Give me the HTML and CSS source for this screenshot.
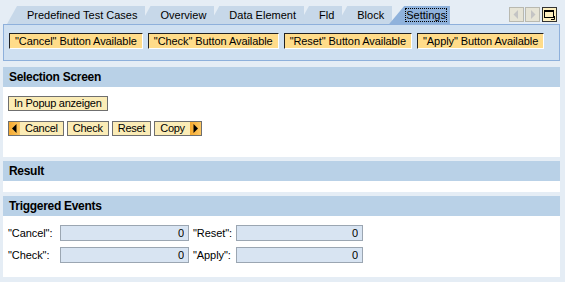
FILE: index.html
```html
<!DOCTYPE html>
<html lang="en">
<head>
    <meta charset="UTF-8">
    <title>Settings</title>
    <link rel="stylesheet" href="styles.css">
</head>
<body>
    <div class="page">
        <div class="tabstrip">
            <div class="tabs">
                <div class="tab">Predefined Test Cases</div>
                <div class="tab">Overview</div>
                <div class="tab">Data Element</div>
                <div class="tab">Fld</div>
                <div class="tab">Block</div>
                <div class="tab selected"><span class="focus">Settings</span></div>
            </div>
            <div class="tab-nav">
                <span class="nav-btn disabled">
                    <svg width="7" height="9" viewBox="0 0 7 9"><path d="M5 0 L5 9 L0.5 4.5 Z" fill="#c4c4c4"/></svg>
                </span>
                <span class="nav-btn disabled">
                    <svg width="7" height="9" viewBox="0 0 7 9"><path d="M2 0 L2 9 L6.5 4.5 Z" fill="#c4c4c4"/></svg>
                </span>
                <span class="nav-btn menu">
                    <svg width="11" height="10" viewBox="0 0 11 10">
                        <rect x="0.5" y="0.5" width="9" height="7" fill="none" stroke="#000"/>
                        <rect x="0" y="0" width="10" height="2" fill="#000"/>
                        <path d="M7 9.5 L10.5 9.5 L10.5 6" fill="none" stroke="#000"/>
                    </svg>
                </span>
            </div>
        </div>

        <div class="tabpanel">
            <span class="toggle">"Cancel" Button Available</span>
            <span class="toggle">"Check" Button Available</span>
            <span class="toggle">"Reset" Button Available</span>
            <span class="toggle">"Apply" Button Available</span>
        </div>

        <div class="group">
            <div class="group-head">Selection Screen</div>
            <div class="group-body selection">
                <div class="row">
                    <button class="btn">In Popup anzeigen</button>
                </div>
                <div class="row">
                    <button class="btn btn-prev"><span class="arrow"><svg width="5" height="9" viewBox="0 0 5 9"><path d="M4.5 0 L4.5 9 L0 4.5 Z" fill="#000"/></svg></span>Cancel</button>
                    <button class="btn">Check</button>
                    <button class="btn">Reset</button>
                    <button class="btn btn-next">Copy<span class="arrow"><svg width="5" height="9" viewBox="0 0 5 9"><path d="M0.5 0 L0.5 9 L5 4.5 Z" fill="#000"/></svg></span></button>
                </div>
            </div>
        </div>

        <div class="group">
            <div class="group-head">Result</div>
            <div class="group-body result"></div>
        </div>

        <div class="group">
            <div class="group-head">Triggered Events</div>
            <div class="group-body events">
                <div class="event-row">
                    <label class="lbl">"Cancel":</label>
                    <input class="field" type="text" value="0" readonly>
                    <label class="lbl lbl-2">"Reset":</label>
                    <input class="field field-2" type="text" value="0" readonly>
                </div>
                <div class="event-row">
                    <label class="lbl">"Check":</label>
                    <input class="field" type="text" value="0" readonly>
                    <label class="lbl lbl-2">"Apply":</label>
                    <input class="field field-2" type="text" value="0" readonly>
                </div>
            </div>
        </div>
    </div>
</body>
</html>
```

FILE: styles.css
```css
* {
    margin: 0;
    padding: 0;
    box-sizing: border-box;
}

body {
    font-family: 'Liberation Sans', Arial, sans-serif;
    font-size: 11px;
    letter-spacing: -0.08px;
    color: #000;
    background: #e5edf5;
}

.page {
    width: 560px;
    padding-left: 3px;
}

/* tab strip */

.tabstrip {
    height: 24px;
    display: flex;
    align-items: flex-end;
}

.tabs {
    display: flex;
    padding-left: 4px;
}

.tab {
    position: relative;
    height: 18px;
    line-height: 18px;
    padding: 0 8px 0 20px;
    margin-left: -5px;
    background: #c7d8e9;
    white-space: nowrap;
    letter-spacing: 0;
    clip-path: polygon(10px 0, 100% 0, 100% 100%, 0 100%);
}

.tab:first-child {
    margin-left: 0;
}

.tab:nth-child(1) { z-index: 6; }
.tab:nth-child(2) { z-index: 5; }
.tab:nth-child(3) { z-index: 4; }
.tab:nth-child(4) { z-index: 3; }
.tab:nth-child(5) { z-index: 2; }

.tab.selected {
    z-index: 10;
    margin-left: -3px;
    padding: 0 4px 0 17px;
    background: #8fb2dc;
    clip-path: polygon(15px 0, 100% 0, 100% 100%, 0 100%);
}

.focus {
    outline: 1px dotted #000;
    outline-offset: 0;
}

.tab-nav {
    display: flex;
    margin-left: auto;
    margin-bottom: 2px;
    margin-right: 3px;
}

.nav-btn {
    width: 15px;
    height: 15px;
    display: flex;
    align-items: center;
    justify-content: center;
    border: 1px solid #b9b9b0;
    background: #e6e4d6;
    margin-left: 1px;
}

.nav-btn.menu {
    margin-left: 2px;
    border-color: #333;
    background: #fcefbf;
}

/* tab panel with toggle buttons */

.tabpanel {
    display: flex;
    gap: 5px;
    padding: 8px 5px 11px 5px;
    background: #cfe0f1;
    border: 1px solid #8eb0db;
    width: 557px;
}

.toggle {
    height: 16px;
    line-height: 14px;
    padding: 0 5px;
    background: #ffdc8a;
    border: 1px solid;
    border-color: #222 #fff #fff #222;
    white-space: nowrap;
}

/* groups */

.group {
    width: 557px;
    margin-top: 4px;
}

.tabpanel + .group {
    margin-top: 6px;
}

.group-head {
    height: 20px;
    line-height: 20px;
    padding-left: 6px;
    background: #b9d1e7;
    font-weight: bold;
    font-size: 12px;
    letter-spacing: -0.3px;
}

.group-body {
    background: #fff;
}

.selection {
    padding: 9px 5px 21px 5px;
}

.row {
    display: flex;
    gap: 3px;
}

.row + .row {
    margin-top: 10px;
}

.btn {
    font-family: inherit;
    font-size: 11px;
    letter-spacing: -0.25px;
    height: 15px;
    line-height: 13px;
    padding: 0 5px;
    background: #fbecb6;
    border: 1px solid #6f6f6f;
    color: #000;
    display: flex;
    align-items: center;
}

.btn-prev {
    padding-left: 0;
    padding-right: 5px;
}

.btn-next {
    padding-right: 0;
    padding-left: 5px;
}

.arrow {
    height: 13px;
    width: 11px;
    display: flex;
    align-items: center;
    justify-content: center;
    background: linear-gradient(90deg, #f6a92e, #fcc865);
}

.btn-prev .arrow {
    margin-right: 5px;
}

.btn-next .arrow {
    margin-left: 5px;
}

.result {
    height: 11px;
}

.events {
    padding: 9px 0 14px 5px;
}

.event-row {
    display: flex;
    align-items: center;
    height: 16px;
}

.event-row + .event-row {
    margin-top: 6px;
}

.lbl {
    width: 52px;
}

.lbl-2 {
    width: 47px;
    padding-left: 4px;
}

.field {
    width: 129px;
    height: 16px;
    font-family: inherit;
    font-size: 11px;
    text-align: right;
    padding-right: 4px;
    background: #d8e4f2;
    border: 1px solid #9ba6b2;
    color: #000;
}

.field-2 {
    width: 127px;
}
```
